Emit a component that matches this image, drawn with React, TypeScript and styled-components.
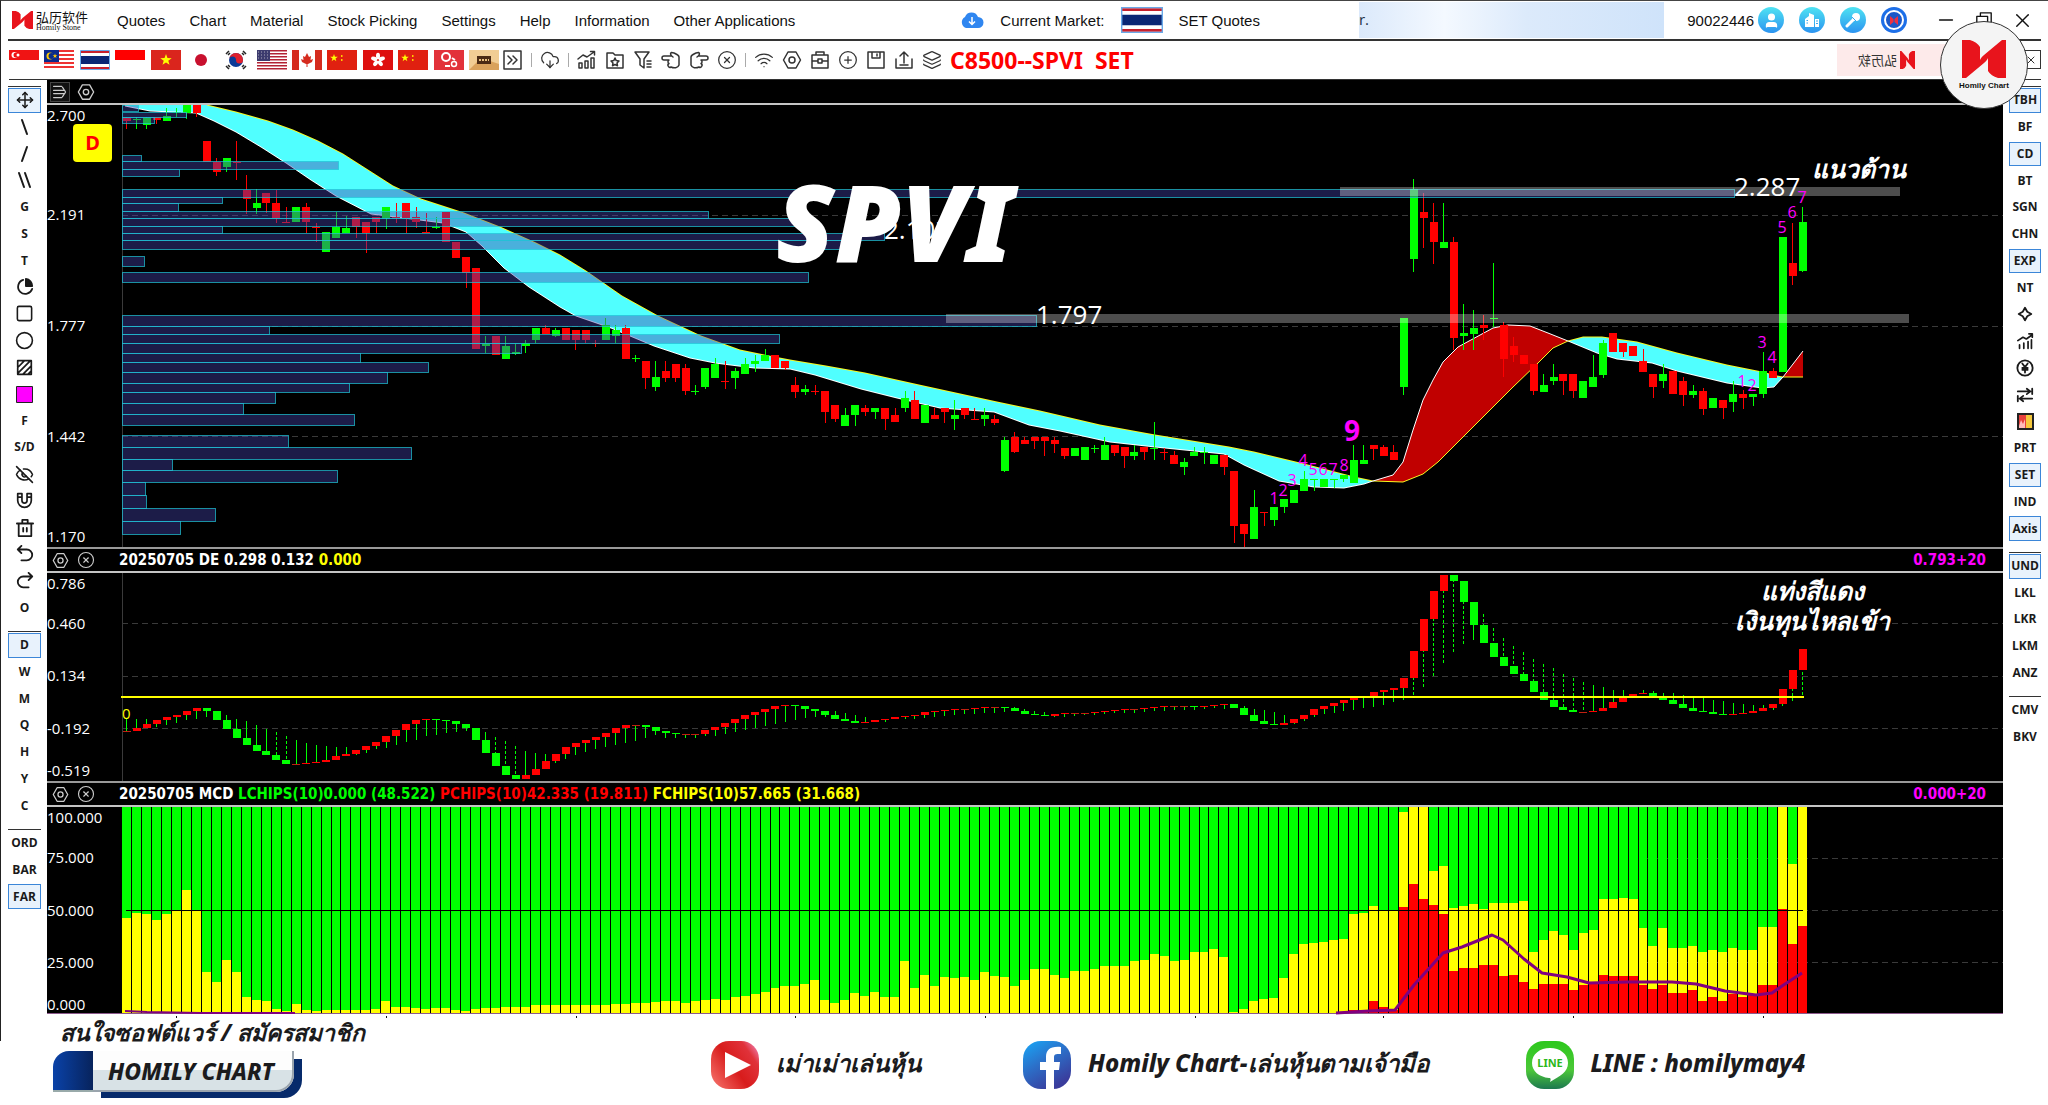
import React from "react";
import styled, { createGlobalStyle, css } from "styled-components";
import { CloudDownload, CircleX, Wifi, CirclePlus, Layers, Move, Square, Circle, EyeOff, Minus, X, User } from "lucide-react";

const Global = createGlobalStyle`
  *, *::before, *::after { box-sizing: border-box; }
  body { margin: 0; background: #fff; color: #111; font-family: "Liberation Sans", Arial, sans-serif; }
  button { font: inherit; color: inherit; background: none; border: 0; padding: 0; cursor: pointer; }
  h1, h2, p { margin: 0; }
  svg { display: block; }
`;

const ui = `"Open Sans", "Noto Sans", sans-serif`;
const bold = `"Noto Sans", "Open Sans", sans-serif`;
const readout = `"DejaVu Sans Condensed", "Noto Sans", sans-serif`;

/* ---------- layout ---------- */
const Page = styled.div`
  position: relative;
  min-height: 100vh;
  overflow: hidden;
`;
const Shell = styled.div`
  border-left: 1px solid #222;
  border-top: 1px solid #444;
`;
const MenuBar = styled.header`
  display: flex;
  align-items: center;
  height: 40px;
  margin: 0 7px;
  border-bottom: 2px solid #333;
  font-size: 15px;
  white-space: nowrap;
`;
const Brand = styled.div`
  display: flex;
  align-items: center;
  gap: 3px;
  width: 109px;
  padding-left: 4px;
`;
const BrandText = styled.span`
  display: flex;
  flex-direction: column;
  font: 400 13px/14px "Noto Sans CJK SC", sans-serif;
  small { font: 400 8px/7px "Liberation Serif", serif; }
`;
const Nav = styled.nav`
  display: flex;
  gap: 24px;
`;
const Market = styled.div`
  display: flex;
  align-items: center;
  gap: 16px;
  margin-left: 165px;
`;
const Notice = styled.div`
  width: 305px;
  height: 36px;
  margin-left: 99px;
  line-height: 34px;
  font-family: ${ui};
  color: #234;
  background: linear-gradient(90deg, #dbe9fb, #f4f9ff 28%, #dceafb 55%, #cfe3fa);
`;
const Account = styled.div`
  display: flex;
  align-items: center;
  gap: 15px;
  margin-left: auto;
`;
const AccountId = styled.span`
  margin-right: -11px;
`;
const RoundButton = styled.button<{ $deep?: boolean }>`
  display: grid;
  place-items: center;
  width: 26px;
  height: 26px;
  border-radius: 50%;
  color: #fff;
  background: ${(p) => (p.$deep ? "#1d6fe8" : "linear-gradient(#4fe3f2, #2b93f0)")};
`;
const WindowControls = styled.div`
  display: flex;
  align-items: center;
  gap: 18px;
  margin: 0 7px 0 13px;
`;
const ToolBar = styled.div`
  display: flex;
  align-items: center;
  height: 39px;
  margin: 0 7px 0 8px;
  border-bottom: 1px solid #333;
  padding-bottom: 1px;
  color: #333;
`;
const Flags = styled.div`
  display: flex;
  align-items: center;
  justify-content: space-between;
  width: 490px;
  button { width: 30px; height: 20px; }
`;
const Tools = styled.div`
  display: flex;
  align-items: center;
  gap: 8px;
  margin-left: 4px;
  button { width: 20px; height: 20px; }
`;
const Split = styled.i`
  width: 1px;
  height: 14px;
  background: #aaa;
`;
const Symbol = styled.h1`
  margin-left: 8px;
  font: 700 23px/28px ${bold};
  color: #f00;
  white-space: pre;
`;
const Partner = styled.div`
  display: flex;
  justify-content: flex-end;
  align-items: center;
  width: 122px;
  height: 32px;
  padding-right: 44px;
  margin-left: auto;
  background: #fdeaea;
`;
const Mirrored = styled.div`
  display: flex;
  align-items: center;
  gap: 3px;
  transform: scaleX(-1);
`;
const CloseBox = styled.button`
  display: grid;
  place-items: center;
  width: 20px;
  height: 19px;
  margin-left: 62px;
  border: 1px solid #333;
`;
const Body = styled.main`
  display: grid;
  grid-template-columns: 46px minmax(0, 1fr) 45px;
`;
const Side = styled.aside<{ $right?: boolean }>`
  display: flex;
  flex-direction: column;
  gap: 10px;
  padding: ${(p) => (p.$right ? "6px 7px 0 6px" : "6px 6px 0 7px")};
`;
const SideGroup = styled.div<{ $h: number }>`
  display: grid;
  grid-auto-rows: 1fr;
  height: ${(p) => p.$h}px;
  border-top: 1px solid #333;
`;
const SideButton = styled.button<{ $on?: boolean }>`
  display: grid;
  place-items: center;
  margin: 1px 0;
  font: 700 12px/16px ${ui};
  color: #1a1a1a;
  border: 1px solid transparent;
  ${(p) => p.$on && css`
    background: #e8f2fc;
    border-color: #3b86d8;
  `}
`;
const Charts = styled.section`
  background: #000;
  align-self: start;
`;
const Strip = styled.div<{ $first?: boolean }>`
  display: flex;
  align-items: center;
  height: ${(p) => (p.$first ? 25 : 26)}px;
  padding: 0 17px 0 3px;
  border-top: ${(p) => (p.$first ? "0" : "2px solid #999")};
  border-bottom: 2px solid #c4c4c4;
  font: 700 15px/20px ${readout};
  color: #fff;
  white-space: pre;
`;
const StripIcons = styled.div`
  display: flex;
  gap: 6px;
  width: 69px;
  color: #ccc;
  button { width: 20px; height: 20px; display: grid; place-items: center; }
`;
const MenuToggle = styled.button`
  border: 1px solid #444;
  background: #111;
`;
const Ink = styled.span<{ $c: string }>`
  color: ${(p) => p.$c};
`;
const Right = styled(Ink)`
  margin-left: auto;
`;
const Plot = styled.svg`
  width: 100%;
  height: auto;
`;

/* ---------- footer ---------- */
const FootHead = styled.div`
  height: 21px;
  padding-left: 59px;
  border-left: 1px solid #222;
  font: italic 800 23px/25px ${bold};
  color: #1b1b1d;
  white-space: nowrap;
`;
const Foot = styled.footer`
  display: flex;
  align-items: flex-start;
  padding-left: 53px;
`;
const Plate = styled.a`
  display: flex;
  width: 250px;
  height: 48px;
  margin-top: 10px;
  color: #1b1b1d;
  text-decoration: none;
`;
const PlateCap = styled.span`
  width: 40px;
  height: 41px;
  border-radius: 16px 0 0 0;
  border-bottom: 2px solid #9aa;
  background: linear-gradient(90deg, #0a42a8, #07235c);
`;
const PlateFace = styled.span`
  width: 201px;
  height: 41px;
  padding-left: 15px;
  border-radius: 0 0 18px 0;
  border-right: 2px solid #9aa4ad;
  border-bottom: 2px solid #9aa4ad;
  background: linear-gradient(#fdfdfd 50%, #d8e2e6 50%);
  box-shadow: 8px 6px 0 #062a6b;
  clip-path: polygon(0 0, 100% 0, 100% 8px, 110% 8px, 110% 130%, 0 130%);
  font: italic 800 23px/40px ${bold};
  white-space: nowrap;
`;
const Social = styled.a<{ $left: number }>`
  display: flex;
  align-items: flex-start;
  gap: 17px;
  margin-left: ${(p) => p.$left}px;
  font: italic 800 24px/43px ${bold};
  color: #1b1b1d;
  text-decoration: none;
  white-space: nowrap;
`;
const Medal = styled.div`
  position: absolute;
  top: 21px;
  right: 20px;
  display: flex;
  flex-direction: column;
  align-items: center;
  gap: 3px;
  width: 88px;
  height: 88px;
  padding-top: 18px;
  border: 1px solid #333;
  border-radius: 50%;
  background: #f4f4f4;
  font: 700 8px/10px "Liberation Sans", sans-serif;
`;

/* ---------- drawings ---------- */
const Mark = ({ w, h }: { w: number; h: number }) => (
  <svg width={w} height={h} viewBox="0 0 44 38" preserveAspectRatio="none" fill="#e8141c" aria-hidden>
    <path d="M0 0H8Q15 2 18 7V20L26 15Q27 19 22 23L4 38H0Z" />
    <path d="M44 0V38H36Q29 36 26 31V18L18 23Q17 19 22 15L40 0Z" />
  </svg>
);
const Star = ({ x, y, s, c }: { x: number; y: number; s: number; c: string }) => (
  <path transform={`translate(${x} ${y}) scale(${s})`} fill={c}
    d="M0-10L2.4-3.2 9.5-3.1 3.8 1.2 5.9 8.1 0 4 -5.9 8.1 -3.8 1.2 -9.5-3.1 -2.4-3.2Z" />
);
const Flag = ({ code, w = 30, h = 20 }: { code: string; w?: number; h?: number }) => {
  const inner: Record<string, React.ReactNode> = {
    sg: <><path d="M0 0H30V10H0Z" fill="#f01414" /><circle cx="5.500" cy="5" r="3" fill="#fff" /><circle cx="7" cy="5" r="2.500" fill="#f01414" /><circle cx="9" cy="5" r="1.500" fill="#fff" /></>,
    my: <><path d="M0 0H30V20H0Z" fill="#fff" />{[0, 4, 8, 12, 16].map((y) => <path key={y} d={`M0 ${y}H30V${y + 2}H0Z`} fill="#e33" />)}<path d="M0 0H15V12H0Z" fill="#0a2a8c" /><circle cx="6" cy="6" r="3.500" fill="#fc0" /><circle cx="7.500" cy="6" r="3" fill="#0a2a8c" /><Star x={11} y={6} s={0.25} c="#fc0" /></>,
    th: <><path d="M0 0H30V20H0Z" fill="#fff" /><path d="M0 1H30V3H0ZM0 17H30V19H0Z" fill="#c8202c" /><path d="M0 6H30V14H0Z" fill="#0a2674" /><path d="M.5.5H29.500V19.500H.5Z" fill="none" stroke="#6aa9e8" /></>,
    id: <path d="M0 0H30V10H0Z" fill="#f00" />,
    vn: <><path d="M0 0H30V20H0Z" fill="#da251d" /><Star x={15} y={10} s={0.6} c="#ff0" /></>,
    jp: <circle cx="15" cy="10" r="6" fill="#c8102e" />,
    kr: <><circle cx="15" cy="10" r="7" fill="#0b3a97" /><path d="M8 10A7 7 0 0 1 22 10A3.500 3.500 0 0 1 15 10A3.500 3.500 0 0 0 8 10Z" fill="#e0202c" /><path d="M5 4L8 1M7 5L9 3M22 1L25 4M5 16L8 19M22 19L25 16M21 3L23 5M7 15L9 17M21 17L23 15" stroke="#222" strokeWidth="1.500" /></>,
    us: <><path d="M0 0H30V20H0Z" fill="#fff" />{[0, 3, 6, 9, 12, 15, 18].map((y) => <path key={y} d={`M0 ${y}H30V${y + 1.5}H0Z`} fill="#b22234" />)}<path d="M0 0H13V11H0Z" fill="#3c3b6e" /><path d="M1 2H12M1 5H12M1 8H12" stroke="#aab" strokeDasharray="1 2" /></>,
    ca: <><path d="M0 0H30V20H0Z" fill="#fff" /><path d="M0 0H7V20H0ZM23 0H30V20H23Z" fill="#d52b1e" /><path d="M15 3L17 7L19 6L18.500 10L21 9L20 12L16 14H15.500V17H14.500V14H14L10 12L9 9L11.500 10L11 6L13 7Z" fill="#d52b1e" /></>,
    cn: <><path d="M0 0H30V20H0Z" fill="#e02010" /><Star x={7} y={8} s={0.4} c="#ff0" /><path d="M14 5h1.500v2H14ZM14 9h1.500v2H14Z" fill="#fc0" /></>,
    hk: <><path d="M0 0H30V20H0Z" fill="#de1010" />{[0, 72, 144, 216, 288].map((a) => <ellipse key={a} cx="15" cy="6" rx="2" ry="3.200" fill="#fff" transform={`rotate(${a} 15 10)`} />)}</>,
    fu: <><path d="M0 0H30V20H0Z" fill="#e2323a" /><circle cx="12" cy="7" r="4" fill="none" stroke="#fff" strokeWidth="2" /><circle cx="20" cy="14" r="2.500" fill="none" stroke="#fff" strokeWidth="1.500" /><path d="M11 16H16M18 8L21 10" stroke="#fff" strokeWidth="2" /></>,
    al: <><path d="M0 0H30V20H0Z" fill="#f1cd94" /><path d="M0 20L12 8L30 14V20Z" fill="#d9a25c" /><path d="M8 6H22V14H8Z" fill="#4a2a14" /><path d="M10 10H20" stroke="#e8c080" strokeWidth="2" strokeDasharray="2 1" /></>,
  };
  return <svg width={w} height={h} viewBox="0 0 30 20" preserveAspectRatio="none" aria-hidden>{inner[code]}</svg>;
};
const Line = ({ d, s = 20, w = 1.5, flip, children }: { d: string; s?: number; w?: number; flip?: boolean; children?: React.ReactNode }) => (
  <svg width={s} height={s} viewBox="0 0 20 20" fill="none" stroke="currentColor" strokeWidth={w} strokeLinecap="round" strokeLinejoin="round" aria-hidden>
    <g transform={flip ? "translate(20 0) scale(-1 1)" : undefined}><path d={d} />{children}</g>
  </svg>
);
const Hex = ({ s = 20 }: { s?: number }) => <Line s={s} d="M6 2H14L18.500 10L14 18H6L1.500 10Z"><circle cx="10" cy="10" r="3" /></Line>;
const hand = "M10 6H3A2 2 0 0 0 3 10H8M8 10A2 2 0 0 0 8 13.500A2 2 0 0 0 10 17C13 18.500 17 18 18 15V7C18 5 15 4 13 3L10.500 2.500C9 3 9 5 12 7";

const flags = [
  ["sg", "Singapore"], ["my", "Malaysia"], ["th", "Thailand"], ["id", "Indonesia"], ["vn", "Vietnam"], ["jp", "Japan"], ["kr", "Korea"],
  ["us", "United States"], ["ca", "Canada"], ["cn", "China"], ["hk", "Hong Kong"], ["cn", "China B"], ["fu", "Futures"], ["al", "All"],
];
const L = { size: 20, strokeWidth: 1.5 };

type Item = { id: string; icon?: React.ReactNode; on?: boolean };
const leftGroups: { h: number; items: Item[] }[] = [
  { h: 535, items: [
    { id: "Move", icon: <Move size={18} />, on: true },
    { id: "Line down", icon: <Line w={2} d="M7 3L12 17" /> },
    { id: "Line up", icon: <Line w={2} d="M12 3L7 17" /> },
    { id: "Parallel", icon: <Line w={2} d="M4 3L9 17M10 3L15 17" /> },
    { id: "G" }, { id: "S" }, { id: "T" },
    { id: "Pie", icon: <Line w={2} s={18} d="M8 2A8 8 0 1 0 18 12"><path d="M11 1V9H18A8 8 0 0 0 11 1Z" fill="currentColor" /></Line> },
    { id: "Rectangle", icon: <Square size={19} strokeWidth={2} rx={0} /> },
    { id: "Circle", icon: <Circle size={19} strokeWidth={2} /> },
    { id: "Hatch", icon: <Line w={2} s={17} d="M2 2H18V18H2ZM2 10L10 2M2 17L17 2M8 18L18 8M14 18L18 14" /> },
    { id: "Colour", icon: <svg width="17" height="17" aria-hidden><path d="M.5.5H16.500V16.500H.5Z" fill="#f0f" stroke="#222" /></svg> },
    { id: "F" }, { id: "S/D" },
    { id: "Hide", icon: <EyeOff size={19} /> },
    { id: "Magnet", icon: <Line w={2} s={17} d="M2 2H7V10A3 3 0 0 0 13 10V2H18V10A8 8 0 0 1 2 10ZM2 6H7M13 6H18" /> },
    { id: "Delete", icon: <Line w={2} s={18} d="M1 5H19M7 5V1H13V5M3 5V19H17V5M8 10V14M12 10V14" /> },
    { id: "Undo", icon: <Line w={2} s={18} d="M6 1L2 5L6 9M2 5H12A6 6 0 0 1 12 17H6" /> },
    { id: "Redo", icon: <Line w={2} s={18} flip d="M6 1L2 5L6 9M2 5H12A6 6 0 0 1 12 17H6" /> },
    { id: "O" },
  ] },
  { h: 188, items: [{ id: "D", on: true }, { id: "W" }, { id: "M" }, { id: "Q" }, { id: "H" }, { id: "Y" }, { id: "C" }] },
  { h: 81, items: [{ id: "ORD" }, { id: "BAR" }, { id: "FAR", on: true }] },
];
const rightGroups: { h: number; items: Item[] }[] = [
  { h: 456, items: [
    { id: "TBH", on: true }, { id: "BF" }, { id: "CD", on: true }, { id: "BT" }, { id: "SGN" }, { id: "CHN" }, { id: "EXP", on: true }, { id: "NT" },
    { id: "Diamond", icon: <Line w={2} s={18} d="M10 3L12.500 7.500L17 10L12.500 12.500L10 17L7.500 12.500L3 10L7.500 7.500Z" /> },
    { id: "Trend", icon: <Line w={2} s={17} d="M3 18V14M8 18V12M13 18V10M17 18V8M1 9L7 5L11 7L18 2M14 1H18V5" /> },
    { id: "Currency", icon: <Line w={2} s={18} d="M7 5L10 9L13 5M10 9V15M7 10H13M7 12H13"><circle cx="10" cy="10" r="8.500" /></Line> },
    { id: "Swap", icon: <Line w={2} s={18} d="M2 6H16M12 3L16 6L12 9M18 3V9M18 14H4M8 11L4 14L8 17M2 11V17" /> },
    { id: "Palette", icon: <svg width="17" height="17" aria-hidden><path d="M0 0H17V17H0Z" fill="#e8403c" /><path d="M9 0H17V17H9Z" fill="#f5c83c" /><path d="M2 13L4 7L6 11L8 6V15H2Z" fill="#fbb" /><path d="M1 1H16V16H1Z" fill="none" stroke="#222" strokeWidth="2" /></svg> },
    { id: "PRT" }, { id: "SET", on: true }, { id: "IND" }, { id: "Axis", on: true },
  ] },
  { h: 134, items: [{ id: "UND", on: true }, { id: "LKL" }, { id: "LKR" }, { id: "LKM" }, { id: "ANZ" }] },
  { h: 54, items: [{ id: "CMV" }, { id: "BKV" }] },
];

/* ---------- chart data ---------- */
const STEP = 9.977;
const cx = (i: number) => 126.8 + STEP * i;

// Candles: colour, body top, body bottom, wick top, wick bottom, in thirds of a pixel below `base`.
type C = [string, number, number, number?, number?];
const runs: { base: number; from: number; rows: C[] }[] = [
  { base: 80, from: 0, rows: [
    ["r", 114, 122, 110, 148], ["g", 118, 121, 112, 148], ["g", 113, 135, 110, 147], ["r", 112, 121, 110, 133], ["g", 109, 122, 83, 124], ["g", 96, 99, 83, 112], ["g", 74, 99, 74, 118], ["r", 74, 99, 74, 110],
    ["r", 183, 247], ["r", 247, 275, 235, 287], ["g", 234, 261, 234, 275], ["r", 245, 248, 183, 300], ["r", 329, 356, 285, 403], ["g", 369, 384, 328, 402], ["r", 339, 369, 339, 400], ["r", 369, 413, 330, 428],
    ["r", 426, 429, 382, 428], ["g", 382, 426], ["r", 382, 426, 370, 458], ["r", 441, 444, 428, 485], ["g", 455, 517], ["g", 441, 473, 397, 473], ["g", 443, 458, 408, 458], ["r", 410, 441, 410, 473], ["r", 427, 458, 427, 518],
    ["r", 411, 427, 411, 458], ["g", 382, 415, 382, 447], ["r", 410, 413, 370, 428], ["r", 370, 413, 370, 460], ["r", 411, 427, 382, 444], ["r", 456, 459, 398, 460], ["g", 442, 445, 410, 447], ["r", 397, 485],
    ["r", 487, 535], ["r", 531, 578, 531, 625], ["r", 564, 806], ["g", 792, 797, 768, 818], ["r", 768, 826], ["g", 798, 836, 768, 836], ["g", 815, 823, 792, 826], ["g", 789, 798, 780, 818], ["g", 744, 780, 744, 790],
  ] },
  { base: 180, from: 42, rows: [
    ["r", 444, 461, 435, 461], ["g", 450, 468, 444, 471], ["r", 444, 480], ["r", 450, 480, 450, 510], ["r", 450, 480, 450, 488], ["r", 489, 492, 480, 500], ["g", 436, 480, 415, 480], ["g", 450, 468, 435, 490], ["r", 444, 537, 435, 537],
    ["g", 534, 537, 525, 545], ["r", 544, 594, 544, 627], ["g", 591, 622, 544, 633], ["r", 572, 594, 544, 605], ["r", 552, 594, 552, 605], ["r", 563, 633, 552, 645], ["g", 632, 635, 616, 646], ["g", 563, 622, 563, 627], ["g", 552, 594, 533, 594],
    ["r", 603, 606, 544, 627], ["g", 572, 594, 563, 627], ["g", 552, 583, 533, 583], ["g", 543, 551, 525, 575], ["g", 525, 543, 507, 543], ["r", 525, 563], ["r", 544, 563, 544, 570], ["r", 614, 635, 591, 653], ["g", 628, 636, 616, 646],
    ["r", 633, 636, 616, 646], ["r", 634, 696, 634, 728], ["r", 675, 718, 675, 727], ["g", 704, 738, 685, 738], ["g", 675, 705, 675, 738], ["r", 685, 697, 675, 707], ["g", 685, 697, 685, 717], ["r", 685, 717, 685, 750], ["r", 704, 725, 685, 725],
    ["g", 654, 684, 634, 695], ["r", 661, 717, 633, 717], ["g", 675, 729], ["r", 704, 717, 685, 717], ["r", 685, 697, 685, 728], ["g", 704, 717, 661, 750], ["r", 685, 705, 685, 717], ["r", 717, 720, 685, 720], ["g", 704, 717, 685, 738],
    ["r", 717, 729, 704, 735], ["g", 780, 873, 771, 877], ["r", 770, 815, 757, 820], ["r", 781, 793, 770, 793], ["r", 770, 783, 770, 806], ["r", 770, 783, 770, 827], ["r", 781, 793, 770, 818], ["r", 803, 827, 803, 838], ["g", 803, 827],
  ] },
  { base: 160, from: 96, rows: [
    ["g", 862, 899], ["g", 864, 867, 855, 878], ["g", 854, 900, 832, 900], ["r", 854, 879, 854, 888], ["r", 862, 888, 862, 923], ["g", 876, 888, 855, 900], ["r", 862, 876, 862, 900], ["g", 864, 867, 785, 900], ["r", 876, 879, 865, 899],
    ["r", 885, 911, 873, 911], ["g", 906, 920, 895, 944], ["g", 876, 888, 862, 888], ["g", 877, 880, 862, 911], ["g", 885, 911], ["r", 885, 920, 885, 944], ["r", 933, 1097, 933, 1148], ["r", 1093, 1122, 1093, 1160], ["g", 1042, 1136, 990, 1136],
    ["r", 1055, 1058, 1055, 1098], ["g", 1042, 1080, 1042, 1098], ["g", 1017, 1042, 1017, 1058], ["g", 991, 1029], ["g", 957, 993, 933, 993], ["g", 957, 960, 957, 993], ["g", 957, 981], ["g", 957, 960, 957, 983], ["g", 944, 957, 944, 966],
    ["g", 899, 970, 854, 970], ["g", 899, 911, 854, 911], ["r", 854, 866, 854, 900], ["r", 862, 888, 854, 888], ["r", 875, 899, 854, 899], ["g", 475, 682, 475, 706], ["g", 88, 296, 58, 335], ["r", 156, 174, 100, 264], ["r", 186, 246, 128, 311],
    ["g", 247, 264, 128, 264], ["r", 247, 533, 231, 570], ["g", 520, 528, 432, 571], ["g", 504, 521, 450, 571], ["r", 494, 504, 465, 540], ["g", 475, 478, 309, 500], ["r", 494, 597, 485, 650], ["r", 559, 586, 530, 605], ["r", 585, 611],
    ["r", 612, 693, 612, 706], ["g", 675, 695, 642, 695], ["g", 651, 663, 612, 675], ["r", 642, 662, 642, 706], ["r", 642, 692, 642, 713], ["g", 663, 713], ["g", 651, 682, 585, 682], ["g", 549, 645, 540, 655], ["r", 520, 577], ["r", 549, 577, 549, 590],
    ["r", 559, 587], ["r", 603, 635, 568, 635], ["r", 642, 682, 642, 713], ["g", 642, 663, 612, 685], ["r", 633, 702], ["r", 662, 706, 650, 738], ["g", 693, 706, 675, 713], ["r", 693, 746, 685, 766], ["g", 713, 745], ["r", 720, 744, 720, 778],
    ["g", 702, 725, 662, 757], ["r", 702, 714, 690, 746], ["g", 702, 710, 702, 738], ["g", 633, 702, 575, 713], ["r", 633, 655, 625, 655], ["g", 232, 635], ["r", 309, 348, 188, 374], ["g", 186, 333, 142, 336],
  ] },
];

// Volume profile: top, bottom (thirds below 80) and right edge.
const profile: [number, number, number][] = [
  [75, 94, 138], [95, 110, 186], [110, 130, 154], [226, 243, 141], [244, 267, 338], [268, 287, 179], [328, 351, 1734], [351, 370, 222], [370, 392, 178], [392, 415, 708], [415, 437, 805],
  [437, 460, 222], [460, 481, 884], [481, 508, 844], [529, 557, 144], [577, 605, 808], [706, 737, 1036], [737, 761, 269], [761, 790, 779], [790, 818, 521], [818, 847, 360], [847, 877, 428],
  [877, 908, 387], [908, 937, 349], [937, 970, 275], [970, 1001, 243], [1001, 1034, 354], [1066, 1101, 288], [1101, 1136, 411], [1136, 1171, 172], [1171, 1207, 337], [1207, 1246, 145],
  [1246, 1283, 146], [1283, 1322, 215], [1322, 1361, 180],
];

const slowA = "207,105 236,112 268,121 293,130 318,141 343,154 368,170 393,186 421,199 464,213 500,227 536,243 560,255 586,271 622,296 658,316 701,336 740,350 769,356 790,360 826,366 865,373 919,385 997,402 1040,411 1100,425 1155,435 1229,447 1254,452 1304,464 1354,477 1373,481";
const fastA = "1373,481 1364,484 1344,488 1314,487 1279,481 1244,465 1224,454 1155,447 1110,442 1060,431 1029,425 994,412 940,408 897,398 861,389 815,375 790,369 754,368 715,363 690,358 654,346 611,328 576,316 560,307 529,287 504,268 482,246 466,232 443,223 404,218 371,214 336,196 311,180 286,163 261,147 236,132 214,121 196,113 150,111 125,106";
const slowB = "1373,481 1403,482 1423,474 1438,462 1478,422 1513,387 1538,363 1553,348 1568,341";
const fastB = "1568,341 1548,333 1530,326 1508,325 1493,328 1458,347 1443,362 1433,380 1423,400 1413,430 1403,462 1393,475 1373,481";
const slowC = "1568,341 1583,337 1602,337 1637,342 1677,353 1727,365 1762,372 1777,376 1783,377";
const fastC = "1783,377 1774,387 1762,388 1727,383 1677,371 1652,363 1617,359 1597,353 1568,341";

// Countdown marks: text, x, baseline.
const marks: [string, number, number][] = [
  ["1", 1274, 504], ["2", 1283, 496], ["3", 1292, 486], ["4", 1303, 466], ["5", 1313, 475], ["6", 1323, 475], ["7", 1333, 475], ["8", 1344, 471],
  ["1", 1742, 387], ["2", 1752, 391], ["3", 1762, 348], ["4", 1772, 363], ["5", 1782, 233], ["6", 1792, 218], ["7", 1802, 203],
];

// DE: close and wick end per bar.
const de: [number, number][] = [
  [731, 719], [728, 719], [724, 719], [720, 727], [717, 725], [715, 723], [711, 720], [708, 719], [711, 717], [720, 711], [729, 715], [738, 719], [745, 721], [751, 725], [755, 729], [760, 732], [764, 736], [764, 740], [763, 743], [762, 745],
  [760, 746], [756, 747], [754, 747], [750, 755], [746, 753], [742, 749], [736, 748], [730, 745], [724, 742], [720, 740], [719, 736], [720, 735], [721, 733], [724, 732], [728, 731], [740, 732], [753, 732], [766, 737], [775, 741], [779, 746],
  [775, 751], [769, 753], [761, 754], [754, 763], [747, 759], [743, 755], [740, 752], [737, 749], [733, 747], [728, 745], [725, 743], [725, 741], [727, 738], [731, 735], [733, 738], [734, 738], [734, 738], [734, 738], [730, 736], [727, 736],
  [723, 734], [719, 732], [715, 730], [712, 728], [709, 726], [706, 724], [705, 722], [706, 720], [709, 718], [711, 717], [715, 717], [719, 711], [721, 713], [723, 715], [722, 717], [720, 722], [719, 722], [717, 719], [716, 719], [715, 719],
  [712, 718], [711, 717], [710, 716], [709, 715], [709, 714], [708, 714], [707, 713], [707, 713], [708, 712], [711, 707], [714, 709], [715, 711], [716, 712], [714, 717], [713, 717], [713, 716], [713, 715], [712, 715], [711, 714], [710, 713],
  [709, 713], [709, 713], [708, 712], [707, 711], [706, 711], [706, 710], [706, 710], [707, 710], [706, 709], [705, 708], [704, 709], [708, 705], [715, 706], [721, 709], [724, 710], [725, 712], [723, 715], [719, 724], [715, 721], [709, 717],
  [706, 714], [703, 713], [700, 711], [698, 710], [696, 708], [692, 707], [690, 705], [688, 702], [678, 700], [651, 695], [619, 687], [591, 676], [575, 663], [581, 652], [602, 644], [625, 640], [643, 614], [657, 628], [666, 638], [674, 646],
  [681, 652], [692, 659], [700, 664], [707, 668], [710, 674], [712, 678], [712, 682], [711, 685], [708, 687], [702, 690], [698, 690], [694, 698], [693, 690], [696, 691], [700, 693], [704, 693], [708, 695], [711, 697], [712, 698], [714, 700],
  [715, 701], [714, 703], [713, 704], [711, 705], [708, 705], [704, 710], [689, 706], [670, 701], [649, 695],
];

// MCD: heights of the yellow and red columns.
const yellow = [
  96, 101, 100, 94, 100, 103, 124, 103, 42, 32, 54, 42, 17, 14, 13, 5, 3, 10, 4, 3, 4, 4, 4, 4, 4, 5, 13, 7, 7, 6, 5, 6, 6, 4, 3, 5, 6, 6, 7, 7, 7, 9, 9, 9, 9, 9, 9, 9, 9, 10, 10, 11, 11, 12, 13, 13, 11, 13,
  14, 15, 14, 17, 18, 20, 22, 26, 28, 28, 30, 34, 14, 11, 14, 21, 18, 22, 17, 17, 53, 26, 39, 28, 37, 36, 37, 34, 42, 38, 37, 28, 34, 45, 45, 39, 36, 43, 43, 45, 48, 48, 48, 53, 54, 60, 58, 53, 54, 62, 62, 65, 57, 2, 5, 13, 15, 16, 36, 60,
  70, 71, 72, 74, 75, 100, 101, 108, 103, 103, 202, 207, 207, 143, 148, 106, 108, 110, 105, 111, 111, 111, 113, 62, 74, 83, 79, 64, 81, 84, 115, 115, 116, 115, 86, 68, 86, 66, 66, 68, 62, 64, 62, 66, 64, 64, 87, 87, 207, 150, 207,
];
const redFrom = 123;
const red = [4, 4, 13, 7, 4, 107, 130, 115, 109, 100, 43, 46, 46, 49, 49, 38, 39, 32, 25, 30, 30, 30, 24, 29, 31, 39, 38, 38, 38, 29, 25, 29, 21, 21, 24, 13, 17, 13, 20, 17, 20, 29, 29, 105, 70, 88];

const RED = "#ff0000";
const GREEN = "#00ff00";

const Grid = ({ ys }: { ys: number[] }) => (
  <g stroke="#3a3a3a" strokeDasharray="6 4">
    {ys.map((y) => <path key={y} d={`M122 ${y}.5H2003`} />)}
    <path d="M122.500 0V1014" strokeDasharray="none" />
  </g>
);
const Scale = ({ rows }: { rows: [string, number][] }) => (
  <g fill="#fff" fontFamily={ui} fontSize="15">
    {rows.map(([t, y]) => <text key={t} x="47" y={y}>{t}</text>)}
  </g>
);

const PricePlot = () => (
  <Plot viewBox="47 105 1956 442" role="img" aria-label="Price chart">
    <Grid ys={[215, 326, 436]} />
    <g shapeRendering="crispEdges">
      <polygon points={`125,105 ${slowA} ${fastA}`} fill="#50ffff" />
      <polygon points={`${slowC} ${fastC}`} fill="#50ffff" />
      <polygon points={`${slowB} ${fastB}`} fill="#c00000" />
      <polygon points="1783,377 1803,351 1803,377" fill="#c00000" />
    </g>
    <g fill="none" strokeWidth="1">
      {[slowA, slowB, slowC, "1783,377 1803,377"].map((p) => <polyline key={p} points={p} stroke="#f8f820" />)}
      {[fastA, fastB, fastC, "1783,377 1803,351"].map((p) => <polyline key={p} points={p} stroke="#fff" />)}
    </g>
    {runs.map((run) => run.rows.map(([c, t, b, wt = t, wb = b], k) => {
      const x = cx(run.from + k);
      const y = (v: number) => run.base + v / 3;
      return (
        <g key={`${run.from}-${k}`} fill={c === "r" ? RED : GREEN} shapeRendering="crispEdges">
          <rect x={x - 4} y={y(t)} width="8" height={Math.max(1, (b - t) / 3)} />
          <rect x={Math.round(x - 0.5)} y={y(wt)} width="1" height={(wb - wt) / 3} />
        </g>
      );
    }))}
    <g fill="#4343ab" fillOpacity="0.420" stroke="#20c8d8" strokeOpacity="0.700">
      {profile.map(([t, b, r]) => {
        const top = Math.round(80 + t / 3) + 0.5;
        return <rect key={t} x="122.500" y={top} width={r - 122} height={Math.round(80 + b / 3) + 0.5 - top} />;
      })}
    </g>
    <g fill="#fff" fillOpacity="0.300">
      <rect x="1340" y="187" width="560" height="9" />
      <rect x="946" y="314" width="963" height="9" />
    </g>
    <g fill="#fff" fontFamily={ui} fontSize="26">
      <text x="884" y="239">2.103</text>
      <text x="1036" y="324">1.797</text>
      <text x="1734" y="196">2.287</text>
    </g>
    <g fill="#f0f" fontFamily={ui} fontSize="16" textAnchor="middle">
      {marks.map(([t, x, y]) => <text key={x} x={x} y={y}>{t}</text>)}
      <text x="1352" y="441" fontSize="28" fontWeight="700">9</text>
    </g>
    <text x="776" y="262" fill="#fff" fontFamily={bold} fontSize="107" fontWeight="900" fontStyle="italic">SPVI</text>
    <text x="1812" y="178" fill="#fff" fontFamily={bold} fontSize="25" fontWeight="800" fontStyle="italic">แนวต้าน</text>
    <Scale rows={[["2.700", 121], ["2.191", 220], ["1.777", 331], ["1.442", 442], ["1.170", 542]]} />
    <rect x="73" y="124" width="39" height="38" rx="4" fill="#ff0" />
    <text x="92.500" y="150" textAnchor="middle" fill="#f00" fontFamily={bold} fontSize="20" fontWeight="700">D</text>
  </Plot>
);

const DePlot = () => (
  <Plot viewBox="47 573 1956 208" role="img" aria-label="DE indicator">
    <Grid ys={[623, 676, 728]} />
    <g shapeRendering="crispEdges">
      {de.map(([y, w], i) => {
        const prev = i ? de[i - 1][0] : y;
        const top = Math.min(prev, y);
        const x = cx(i);
        return (
          <g key={i}>
            <path d={`M${Math.round(x - 0.5) + 0.5} ${w}V${y}`} stroke="#00ff00" strokeDasharray={Math.abs(w - y) > 26 ? "3 2" : undefined} />
            <rect x={x - 4} y={top} width="8" height={Math.max(1, Math.abs(prev - y))} fill={y < prev ? RED : y > prev ? GREEN : "#c02010"} />
          </g>
        );
      })}
    </g>
    <path d="M121 697H1804" stroke="#ff0" strokeWidth="2" />
    <text x="122" y="719" fill="#ff0" fontFamily={ui} fontSize="15">0</text>
    <g fill="#fff" fontFamily={bold} fontSize="25" fontWeight="800" fontStyle="italic" textAnchor="middle">
      <text x="1812" y="600">แท่งสีแดง</text>
      <text x="1812" y="630">เงินทุนไหลเข้า</text>
    </g>
    <Scale rows={[["0.786", 589], ["0.460", 629], ["0.134", 681], ["-0.192", 734], ["-0.519", 776]]} />
  </Plot>
);

const McdPlot = () => (
  <Plot viewBox="47 807 1956 213" role="img" aria-label="MCD indicator">
    <rect x="47" y="1014" width="1956" height="6" fill="#fff" />
    <g stroke="#3a3a3a" strokeDasharray="6 4">
      {[858, 910, 962].map((y) => <path key={y} d={`M122 ${y}.5H2003`} />)}
    </g>
    <g shapeRendering="crispEdges">
      {yellow.map((h, i) => {
        const x = Math.round(122 + STEP * i);
        const w = Math.round(122 + STEP * (i + 1)) - x - 1;
        const r = i >= redFrom ? red[i - redFrom] : 0;
        return (
          <g key={i}>
            <rect x={x} y="807" width={w} height={207 - h} fill={GREEN} />
            <rect x={x} y={1014 - h} width={w} height={h} fill="#ff0" />
            {r > 0 && <rect x={x} y={1014 - r} width={w} height={r} fill={RED} />}
          </g>
        );
      })}
    </g>
    <path d="M126 910.500H1803" stroke="#000" />
    <path d="M47 1013.500H2003" stroke="#8c5a8c" />
    <path d="M125 1011L147 1012L200 1013H295" fill="none" stroke="#800080" strokeWidth="2" />
    <path d="M1336 1013L1369 1011L1395 1010L1414 985L1443 953L1462 947L1492 935L1503 940L1524 959L1542 973L1567 977L1589 983L1629 982H1672L1696 984L1725 991L1756 995L1772 993L1782 986L1802 973"
      fill="none" stroke="#800080" strokeWidth="3" strokeLinejoin="round" />
    <g fill="#111">{[176, 386, 576, 795, 985, 1195, 1383, 1573, 1763].map((x) => <rect key={x} x={x} y="1016" width="1" height="2" />)}</g>
    <Scale rows={[["100.000", 823], ["75.000", 863], ["50.000", 916], ["25.000", 968], ["0.000", 1010]]} />
  </Plot>
);

const SideBar = ({ groups, right }: { groups: typeof leftGroups; right?: boolean }) => (
  <Side $right={right}>
    {groups.map((g, k) => (
      <SideGroup key={k} $h={g.h}>
        {g.items.map((b) => (
          <SideButton key={b.id} $on={b.on} aria-label={b.icon ? b.id : undefined}>{b.icon ?? b.id}</SideButton>
        ))}
      </SideGroup>
    ))}
  </Side>
);

export default function App() {
  return (
    <Page>
      <Global />
      <Shell>
        <MenuBar>
          <Brand>
            <Mark w={21} h={18} />
            <BrandText>弘历软件<small>Homily Stone</small></BrandText>
          </Brand>
          <Nav>
            {["Quotes", "Chart", "Material", "Stock Picking", "Settings", "Help", "Information", "Other Applications"].map((t) => <button key={t}>{t}</button>)}
          </Nav>
          <Market>
            <svg width="24" height="18" viewBox="0 0 24 18" aria-hidden>
              <path d="M6 17A6 6 0 0 1 5 6A7 7 0 0 1 18 6A5.500 5.500 0 0 1 18 17Z" fill="#2f86f0" />
              <path d="M12 6V13M9 10.500L12 13.500L15 10.500" fill="none" stroke="#fff" strokeWidth="1.500" />
            </svg>
            <span>Current Market:</span>
            <Flag code="th" w={42} h={26} />
            <span>SET Quotes</span>
          </Market>
          <Notice>r.</Notice>
          <Account>
            <AccountId>90022446</AccountId>
            <RoundButton aria-label="Profile"><User size={17} fill="#fff" /></RoundButton>
            <RoundButton aria-label="Company">
              <svg width="16" height="16" viewBox="0 0 16 16" fill="#fff" aria-hidden>
                <path d="M1 15V7L5 4V15ZM5 15V1L10 3V15ZM11 15V7H15V15Z" /><path d="M12 9H14M12 11.500H14M2.500 8.500H4M2.500 11H4" stroke="#3aa8f0" />
              </svg>
            </RoundButton>
            <RoundButton aria-label="Voice">
              <svg width="16" height="16" viewBox="0 0 16 16" aria-hidden>
                <circle cx="11" cy="5" r="4" fill="#fff" /><path d="M8 8L2 14" stroke="#fff" strokeWidth="3" strokeLinecap="round" /><path d="M7 5L11 9" stroke="#3aa8f0" />
              </svg>
            </RoundButton>
            <RoundButton $deep aria-label="Homily">
              <svg width="26" height="26" viewBox="0 0 26 26" aria-hidden>
                <circle cx="13" cy="13" r="9" fill="#1c58c8" stroke="#fff" strokeWidth="2" />
                <path d="M9 9L12.500 12V15L9 18ZM17 9V18L13.500 15V12Z" fill="#f03040" />
              </svg>
            </RoundButton>
            <WindowControls>
              <button aria-label="Minimise"><Minus size={22} strokeWidth={1.5} /></button>
              <button aria-label="Restore"><Line s={18} d="M2 6H14V18H2ZM6 6V2H18V14H14" /></button>
              <button aria-label="Close"><X size={23} strokeWidth={1.5} /></button>
            </WindowControls>
          </Account>
        </MenuBar>
        <ToolBar>
          <Flags>
            {flags.map(([c, n]) => <button key={n} aria-label={n}><Flag code={c} /></button>)}
          </Flags>
          <Tools>
            <button aria-label="More markets"><Line d="M1 1H18V19H1ZM5 6L9 10L5 14M10 6L14 10L10 14" /></button>
            <Split />
            <button aria-label="Download"><CloudDownload {...L} /></button>
            <Split />
            <button aria-label="Statistics"><Line d="M2 18V13H5V18ZM8 18V11H11V18ZM14 18V8H17V18ZM1 9L6 5L10 7L17 2M13.500 1.500H17.500V5" /></button>
            <button aria-label="Favourites"><Line d="M2 3H8L10 5H18V18H2Z"><path d="M10 8L11.200 10.600 14 11 12 13 12.500 15.700 10 14.500 7.500 15.700 8 13 6 11 8.800 10.600Z" /></Line></button>
            <button aria-label="Filter"><Line d="M2 2H16L11 9V18L7 15V9ZM14 11H18M14 14H18M14 17H18" /></button>
            <button aria-label="Previous"><Line d={hand} /></button>
            <button aria-label="Next"><Line flip d={hand} /></button>
            <button aria-label="Clear"><CircleX {...L} /></button>
            <Split />
            <button aria-label="Signal"><Wifi {...L} /></button>
            <button aria-label="Options"><Hex /></button>
            <button aria-label="Toolbox"><Line d="M2 5H18V18H2ZM6 5V2H14V5M2 11H8M12 11H18M8 9H12V13H8Z" /></button>
            <button aria-label="Add"><CirclePlus {...L} /></button>
            <button aria-label="Save"><Line d="M2 2H18V18H2ZM6 2V8H14V2M11 4V6" /></button>
            <button aria-label="Share"><Line d="M2 9V18H18V9M10 13V2M6 6L10 2L14 6M6 15H14" /></button>
            <button aria-label="Layers"><Layers {...L} /></button>
          </Tools>
          <Symbol>{"C8500--SPVI  SET"}</Symbol>
          <Partner>
            <Mirrored>
              <Mark w={15} h={18} />
              <BrandText aria-hidden>弘历软</BrandText>
            </Mirrored>
          </Partner>
          <CloseBox aria-label="Close chart"><X size={12} /></CloseBox>
        </ToolBar>
        <Body>
          <SideBar groups={leftGroups} />
          <Charts>
            <Strip $first>
              <StripIcons>
                <MenuToggle aria-label="Menu"><Line s={16} d="M2 3H12M2 8H16M2 12H16M2 17H12M13 4L17 10L13 16" /></MenuToggle>
                <button aria-label="Settings"><Hex s={18} /></button>
              </StripIcons>
            </Strip>
            <PricePlot />
            <Strip>
              <StripIcons>
                <button aria-label="DE settings"><Hex s={17} /></button>
                <button aria-label="Close DE"><CircleX size={18} strokeWidth={1.5} /></button>
              </StripIcons>
              20250705 DE 0.298 0.132 <Ink $c="#ff0">0.000</Ink>
              <Right $c="#f0f">0.793+20</Right>
            </Strip>
            <DePlot />
            <Strip>
              <StripIcons>
                <button aria-label="MCD settings"><Hex s={17} /></button>
                <button aria-label="Close MCD"><CircleX size={18} strokeWidth={1.5} /></button>
              </StripIcons>
              20250705 MCD <Ink $c="#0f0">LCHIPS(10)0.000 (48.522) </Ink><Ink $c="#f00">PCHIPS(10)42.335 (19.811) </Ink><Ink $c="#ff0">FCHIPS(10)57.665 (31.668)</Ink>
              <Right $c="#f0f">0.000+20</Right>
            </Strip>
            <McdPlot />
          </Charts>
          <SideBar groups={rightGroups} right />
        </Body>
      </Shell>
      <FootHead>สนใจซอฟต์แวร์ / สมัครสมาชิก</FootHead>
      <Foot>
        <Plate href="#home">
          <PlateCap />
          <PlateFace>HOMILY CHART</PlateFace>
        </Plate>
        <Social $left={408} href="#youtube">
          <svg width="48" height="48" viewBox="0 0 48 48" aria-hidden>
            <defs><linearGradient id="yt" x1="0" x2="1" y1="0.700" y2="0"><stop offset="0" stopColor="#f0625c" /><stop offset="0.400" stopColor="#d81c1c" /><stop offset="0.750" stopColor="#e0323a" /><stop offset="1" stopColor="#f59ad8" /></linearGradient></defs>
            <rect width="48" height="48" rx="18" fill="url(#yt)" /><path d="M14 11L40 24L14 37Z" fill="#fff" />
          </svg>
          เม่าเม่าเล่นหุ้น
        </Social>
        <Social $left={102} href="#facebook">
          <svg width="48" height="48" viewBox="0 0 48 48" aria-hidden>
            <defs><linearGradient id="fb" x1="0" x2="0.600" y1="0" y2="1"><stop offset="0" stopColor="#18a8f8" /><stop offset="0.500" stopColor="#2c6fc8" /><stop offset="1" stopColor="#3a3c9c" /></linearGradient></defs>
            <rect width="48" height="48" rx="18" fill="url(#fb)" />
            <path d="M23 48V29H17V21H23V16C23 9 27 5 38 6V13C32 13 31 13 31 17V21H37L36 29H31V48Z" fill="#fff" />
          </svg>
          Homily Chart-เล่นหุ้นตามเจ้ามือ
        </Social>
        <Social $left={97} href="#line">
          <svg width="48" height="48" viewBox="0 0 48 48" aria-hidden>
            <defs><linearGradient id="ln" x1="0" x2="0" y1="0" y2="1"><stop offset="0" stopColor="#2cc81c" /><stop offset="0.600" stopColor="#4cc838" /><stop offset="1" stopColor="#1c7850" /></linearGradient></defs>
            <rect width="48" height="48" rx="18" fill="url(#ln)" />
            <path d="M24 7C34 7 42 13 42 22C42 31 34 35 24 41C25 38 25 37 23 37C13 36 6 30 6 22C6 13 14 7 24 7Z" fill="#fff" />
            <text x="24" y="26" textAnchor="middle" fill="#2cb81c" fontFamily={bold} fontWeight="700" fontSize="11" fontStyle="normal">LINE</text>
          </svg>
          LINE : homilymay4
        </Social>
      </Foot>
      <Medal><Mark w={44} h={38} />Homily Chart</Medal>
    </Page>
  );
}
